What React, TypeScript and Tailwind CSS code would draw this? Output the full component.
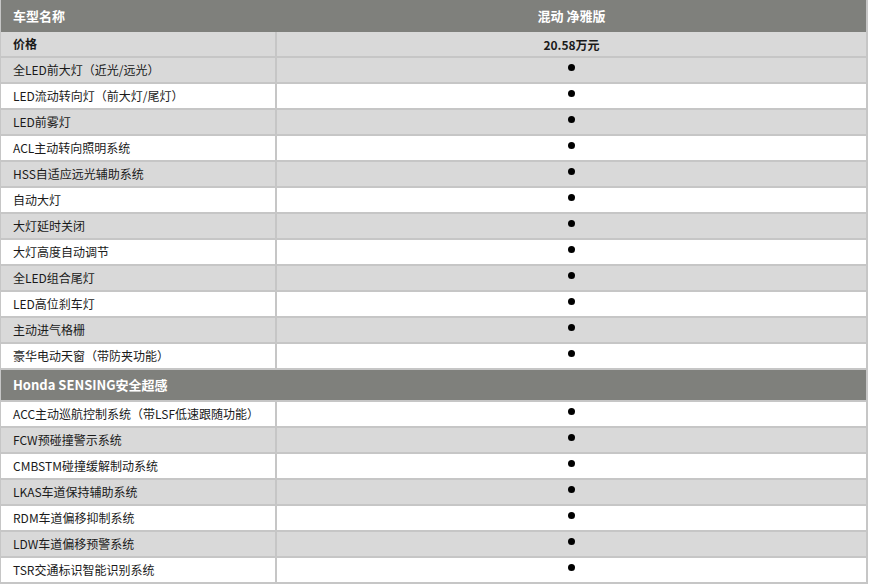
const FONT = "font-['Microsoft_YaHei','Noto_Sans_CJK_SC',sans-serif]"

type Row = { name: string; value: string; bg: 'gray' | 'white'; bold?: boolean }

const LIGHTS: Row[] = [
  { name: '价格', value: '20.58万元', bg: 'gray', bold: true },
  { name: '全LED前大灯（近光/远光）', value: '●', bg: 'gray' },
  { name: 'LED流动转向灯（前大灯/尾灯）', value: '●', bg: 'white' },
  { name: 'LED前雾灯', value: '●', bg: 'gray' },
  { name: 'ACL主动转向照明系统', value: '●', bg: 'white' },
  { name: 'HSS自适应远光辅助系统', value: '●', bg: 'gray' },
  { name: '自动大灯', value: '●', bg: 'white' },
  { name: '大灯延时关闭', value: '●', bg: 'gray' },
  { name: '大灯高度自动调节', value: '●', bg: 'white' },
  { name: '全LED组合尾灯', value: '●', bg: 'gray' },
  { name: 'LED高位刹车灯', value: '●', bg: 'white' },
  { name: '主动进气格栅', value: '●', bg: 'gray' },
  { name: '豪华电动天窗（带防夹功能）', value: '●', bg: 'white' },
]

const SENSING: Row[] = [
  { name: 'ACC主动巡航控制系统（带LSF低速跟随功能）', value: '●', bg: 'white' },
  { name: 'FCW预碰撞警示系统', value: '●', bg: 'gray' },
  { name: 'CMBSTM碰撞缓解制动系统', value: '●', bg: 'white' },
  { name: 'LKAS车道保持辅助系统', value: '●', bg: 'gray' },
  { name: 'RDM车道偏移抑制系统', value: '●', bg: 'white' },
  { name: 'LDW车道偏移预警系统', value: '●', bg: 'gray' },
  { name: 'TSR交通标识智能识别系统', value: '●', bg: 'white' },
]

function SpecRow({ row }: { row: Row }) {
  const bg = row.bg === 'gray' ? 'bg-[#d9d9d9]' : 'bg-white'
  return (
    <div className={`grid grid-cols-[276px_1fr] h-[26px] border-b-2 border-[#c6c6c6] ${bg}`}>
      <div
        className={`flex items-center pl-3 border-r-2 border-[#c6c6c6] text-[12px] text-[#1a1a1a] ${
          row.bold ? 'font-bold' : ''
        }`}
      >
        {row.name}
      </div>
      <div className="flex justify-center">
        {row.value === '●' ? (
          <div className="mt-[6px] w-[7px] h-[7px] rounded-full bg-black" />
        ) : (
          <span className="mt-[4px] text-[12px] font-bold text-[#1a1a1a]">{row.value}</span>
        )}
      </div>
    </div>
  )
}

export default function App() {
  return (
    <div className={`w-[872px] h-[587px] bg-white overflow-hidden ${FONT}`}>
      <div className="w-[868px] border-l border-r-2 border-[#c6c6c6]">
        {/* Model header */}
        <div className="grid grid-cols-[276px_1fr] h-[32px] bg-[#7f807c] text-white text-[13px] font-bold">
          <div className="flex items-center pl-3">车型名称</div>
          <div className="flex items-center justify-center">混动 净雅版</div>
        </div>

        {LIGHTS.map((r) => (
          <SpecRow key={r.name} row={r} />
        ))}

        {/* Section header */}
        <div className="flex items-center h-[32px] pl-3 bg-[#7f807c] border-b-2 border-[#c6c6c6] text-white text-[13px] font-bold">
          Honda SENSING安全超感
        </div>

        {SENSING.map((r) => (
          <SpecRow key={r.name} row={r} />
        ))}
      </div>
    </div>
  )
}
